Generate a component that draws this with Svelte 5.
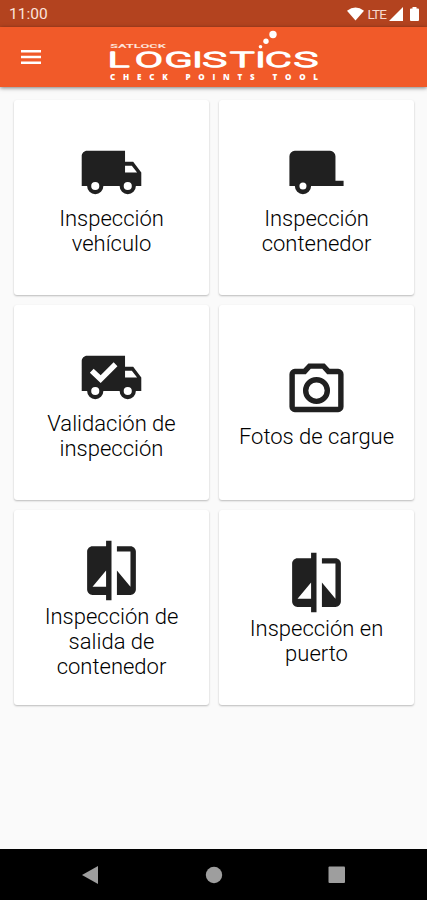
<script>
const truck = "M18 18.5A1.5 1.5 0 0 1 16.5 17A1.5 1.5 0 0 1 18 15.5A1.5 1.5 0 0 1 19.5 17A1.5 1.5 0 0 1 18 18.5M19.5 9.5L21.46 12H17V9.5M6 18.5A1.5 1.5 0 0 1 4.5 17A1.5 1.5 0 0 1 6 15.5A1.5 1.5 0 0 1 7.5 17A1.5 1.5 0 0 1 6 18.5M20 8H17V4H3C1.89 4 1 4.89 1 6V17H3A3 3 0 0 0 6 20A3 3 0 0 0 9 17H15A3 3 0 0 0 18 20A3 3 0 0 0 21 17H23V12L20 8Z"
const truckCheck = truck + "M8 14L14.2 7.8L12.79 6.38L8 11.17L5.41 8.78L4 10.200L8 14Z"
const trailer = "M22 15V17H10A3 3 0 0 1 7 20A3 3 0 0 1 4 17H2V6A2 2 0 0 1 4 4H17A2 2 0 0 1 19 6V15H22M7 15.7A1.3 1.3 0 0 0 5.7 17A1.3 1.3 0 0 0 7 18.3A1.3 1.3 0 0 0 8.3 17A1.3 1.3 0 0 0 7 15.7Z"
const camera = "M20 4H16.83L15 2H9L7.17 4H4A2 2 0 0 0 2 6V18A2 2 0 0 0 4 20H20A2 2 0 0 0 22 18V6A2 2 0 0 0 20 4M20 18H4V6H8.05L9.88 4H14.12L15.95 6H20V18M12 7A5 5 0 0 0 7 12A5 5 0 0 0 12 17A5 5 0 0 0 17 12A5 5 0 0 0 12 7M12 15A3 3 0 0 1 9 12A3 3 0 0 1 12 9A3 3 0 0 1 15 12A3 3 0 0 1 12 15Z"
const compare = "M10 3H5c-1.1 0-2 .9-2 2v14c0 1.1.9 2 2 2h5v2h2V1h-2v2zm0 15H5l5-6v6zm9-15h-5v2h5v13l-5-6v9h5c1.1 0 2-.9 2-2V5c0-1.1-.9-2-2-2z"

let items = [
  { label: "Inspección vehículo", icon: truck },
  { label: "Inspección contenedor", icon: trailer },
  { label: "Validación de inspección", icon: truckCheck },
  { label: "Fotos de cargue", icon: camera },
  { label: "Inspección de salida de contenedor", icon: compare },
  { label: "Inspección en puerto", icon: compare }
]
</script>

<div class="app">
  <div class="status">
    <span class="time">11:00</span>
    <svg class="wifi" viewBox="0 0 18 14"><path d="M0 3.6Q9 -3.2 18 3.6L9 14Z" /></svg>
    <span class="lte">LTE</span>
    <svg class="signal" viewBox="0 0 14 14"><path d="M14 0V14H0Z" /></svg>
    <svg class="battery" viewBox="0 0 9 14"><path d="M2.5 0h4v1.5H8q1 0 1 1V13q0 1-1 1H1q-1 0-1-1V2.5q0-1 1-1h1.500Z" /></svg>
  </div>

  <header>
    <button aria-label="Menú">
      <svg viewBox="0 0 20 14"><path d="M0 0H20V2.500H0ZM0 5.700H20V8.200H0ZM0 11.400H20V13.900H0Z" /></svg>
    </button>
    <svg class="logo" viewBox="0 0 212 52">
      <text class="small" x="2" y="18.500" textLength="56" lengthAdjust="spacingAndGlyphs">SATLOCK</text>
      <text class="big" transform="scale(1.95 1)" x="-0.2 13.9 29 43.1 48.5 62.6 75.4 80.500 95.300" y="38.300">LOGISTICS</text>
      <text class="tagline" x="2" y="50.500" textLength="208">CHECK POINTS TOOL</text>
      <circle cx="152.500" cy="17.800" r="1.800" />
      <circle cx="158" cy="12.300" r="2.700" />
      <circle cx="165" cy="5.500" r="3.700" />
    </svg>
  </header>

  <main>
    {#each items as item}
      <div class="card">
        <svg viewBox="0 0 24 24"><path fill-rule="evenodd" d={item.icon} /></svg>
        <p>{item.label}</p>
      </div>
    {/each}
  </main>

  <nav>
    <svg viewBox="0 0 18 18"><path d="M0 9L16 0V18Z" /></svg>
    <svg viewBox="0 0 18 18"><circle cx="9" cy="9" r="8.200" /></svg>
    <svg viewBox="0 0 18 18"><rect x="0.500" y="0.500" width="16.500" height="16.500" rx="1" /></svg>
  </nav>
</div>

<style>
  :global(body) {
    margin: 0;
  }

  .app {
    display: flex;
    flex-direction: column;
    height: 900px;
    background-color: #fafafa;
    font-family: Roboto, sans-serif;
    overflow: hidden;
  }

  svg {
    display: block;
    fill: currentColor;
  }

  .status {
    display: flex;
    align-items: center;
    box-sizing: border-box;
    height: 27px;
    padding: 0 8px 0 9px;
    background-color: #b3431f;
    color: #fff;
  }

  .time {
    flex: 1;
    font-size: 15.5px;
    color: #fbe4dc;
  }

  .wifi {
    width: 17px;
    height: 14px;
  }

  .lte {
    margin: 0 3px 0 4px;
    font-size: 13.5px;
    letter-spacing: -.9px;
    color: #f8d9ce;
  }

  .signal {
    width: 14px;
    height: 14px;
  }

  .battery {
    width: 9px;
    height: 14px;
    margin-left: 7px;
  }

  header {
    display: flex;
    box-sizing: border-box;
    height: 60px;
    padding-left: 21px;
    background-color: #f15a29;
    color: #fff;
    box-shadow: 0 1px 4px rgba(0, 0, 0, .5);
  }

  button {
    width: 20px;
    height: 14px;
    margin: 23px 67px 0 0;
    padding: 0;
    border: none;
    background: none;
    color: #fff;
  }

  .logo {
    width: 212px;
    height: 52px;
    margin-top: 2px;
    overflow: visible;
  }

  .small {
    font-size: 5.8px;
    font-weight: 700;
    fill: #fde3d9;
  }

  .big {
    font-size: 21px;
    font-weight: 300;
    stroke: #fff;
    stroke-width: 1.3px;
    stroke-linejoin: round;
    paint-order: stroke;
  }

  .tagline {
    font-family: "Open Sans", sans-serif;
    font-size: 8px;
    font-weight: 800;
  }

  main {
    flex: 1;
    display: grid;
    grid-template-columns: 195px 195px;
    grid-auto-rows: 195px;
    gap: 10px;
    align-content: start;
    padding: 13px 14px 0;
  }

  .card {
    display: flex;
    flex-direction: column;
    align-items: center;
    justify-content: center;
    border-radius: 3px;
    background-color: #fff;
    box-shadow: 0 1px 2px rgba(0, 0, 0, .26);
    color: #202020;
  }

  .card svg {
    width: 65px;
    height: 65px;
  }

  p {
    margin: 1px 0 -1px;
    max-width: 165px;
    font-size: 22px;
    line-height: 25px;
    font-weight: 300;
    text-align: center;
    color: #000;
  }

  nav {
    display: flex;
    align-items: center;
    justify-content: center;
    gap: 105px;
    height: 51px;
    background-color: #000;
    color: #9e9e9e;
  }

  nav svg {
    width: 18px;
    height: 18px;
  }
</style>
